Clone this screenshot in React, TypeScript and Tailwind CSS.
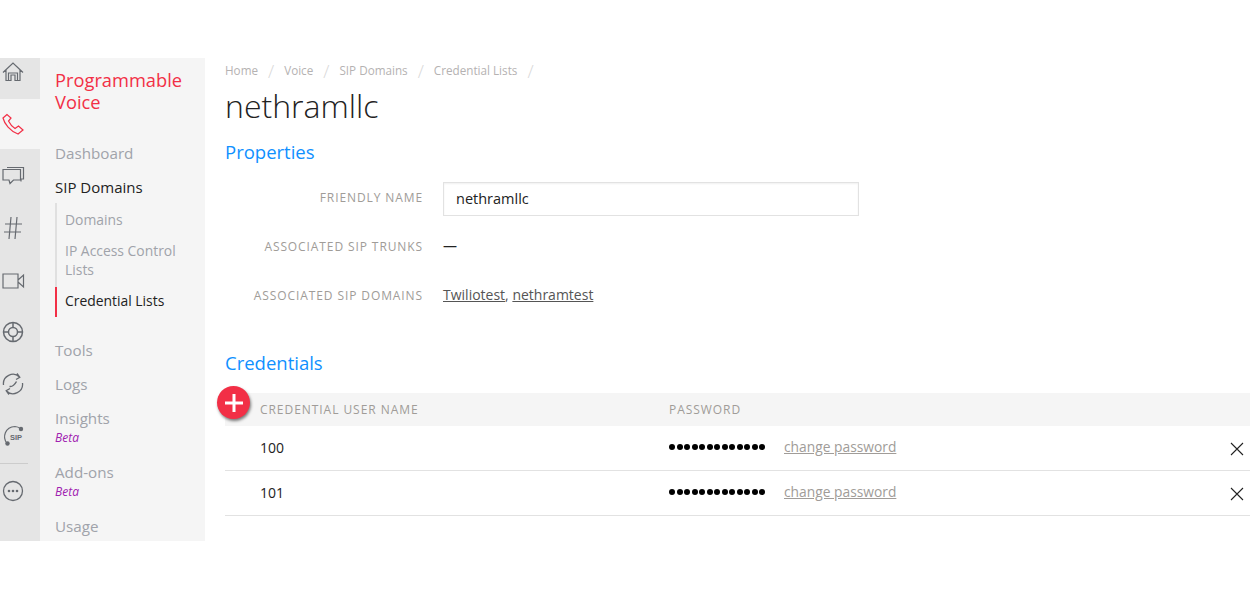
import React from "react";

const Ico = ({ children }: { children: React.ReactNode }) => (
  <svg width="24" height="24" viewBox="0 0 24 24" fill="none" stroke="currentColor" strokeWidth="1.200">
    {children}
  </svg>
);

const railTop = [
  {
    h: 41,
    cls: "flex items-center pl-[1px] pb-[12px]",
    icon: <path d="M2 11.500 12 2l10 9.500M5 9v10.500h5V14h4v5.500h5V9M7.500 19.500V12h9v7.500" />,
  },
  {
    h: 50,
    cls: "flex items-center pl-[1px] bg-[#f5f5f5] text-[#f22f46]",
    icon: <path d="M6 2.500 2 6c1.500 6 7 13 15 16l5-4-4.500-4-3.500 2.500C11.500 15 9 12 7.500 9L10 6z" />,
  },
  {
    h: 52,
    cls: "flex items-center pl-[1px]",
    icon: <path d="M6 4.500h16.500V16H20v2.500M2 6.500h17.500v10.500h-7l-3.500 3.500-1-3.500H2z" />,
  },
  {
    h: 53,
    cls: "flex items-center pl-[1px]",
    icon: <path d="M10 1 8 23M16 1l-2 22M4 8h17M3 16h17" />,
  },
  {
    h: 52,
    cls: "flex items-center pl-[1px] pt-[2px]",
    icon: <path d="M2 5h15v14H2zM17 11l5.500-5v12L17 13" />,
  },
  {
    h: 52,
    cls: "flex items-center pl-[1px]",
    icon: (
      <>
        <circle cx="12" cy="12" r="9.500" strokeWidth="1.500" />
        <circle cx="12" cy="12" r="4.500" strokeWidth="1.500" />
        <path d="M12 2.500v5M12 16.500v5M2.500 12h5M16.500 12h5" strokeWidth="1.500" />
      </>
    ),
  },
  {
    h: 52,
    cls: "flex items-center pl-[1px]",
    icon: (
      <>
        <path d="M2.500 13a9.500 9.500 0 0 1 16-8M21.500 11a9.500 9.500 0 0 1-16 8M16 1.500l2.800 3.800L15 7.500M8 22.500l-2.800-3.800L9 16.500" strokeWidth="1.300" />
        <path d="M8.500 14.500c2.500.5 5-1.500 7-5" strokeWidth="1.500" />
      </>
    ),
  },
];

const NavItem = ({ label, beta, className = "" }: { label: string; beta?: boolean; className?: string }) => (
  <div className={className}>
    <div className="text-[15.200px] leading-[20px] text-[#a0a3aa]">{label}</div>
    {beta && <div className="mt-[2px] text-[12px] leading-[16px] italic text-[#a020b0]">Beta</div>}
  </div>
);

const Field = ({ label, children }: { label: string; children: React.ReactNode }) => (
  <div className="flex items-center h-[49px]">
    <div className="w-[198px] text-right text-[12px] tracking-[0.9px] text-[#a09c98]">{label}</div>
    <div className="ml-[20px] flex-1">{children}</div>
  </div>
);

const rows = ["100", "101"];

export default function App() {
  return (
    <div className="w-[1250px] h-[600px] bg-white overflow-hidden pt-[58px] flex items-start font-['Open_Sans',sans-serif]">
      <div className="w-[40px] h-[483px] bg-[#e5e5e5] shrink-0 flex flex-col text-[#666a70]">
        {railTop.map((r, i) => (
          <div key={i} style={{ height: r.h }} className={r.cls}>
            <Ico>{r.icon}</Ico>
          </div>
        ))}
        <div className="h-[50px] flex items-center pl-[2px] pt-[3px]">
          <svg width="23" height="23" viewBox="0 0 23 23" fill="none" stroke="currentColor" strokeWidth="1.200">
            <path d="M5 18.500C0 12 3 2 13 1.500c2 0 4 1 6 2.500" />
            <circle cx="5.500" cy="18.500" r="2.200" fill="currentColor" stroke="none" />
            <circle cx="19" cy="4" r="2.200" fill="currentColor" stroke="none" />
            <text x="8" y="15" fontSize="7.500" fontWeight="700" fill="currentColor" stroke="none" fontFamily="Liberation Sans, sans-serif">SIP</text>
          </svg>
        </div>
        <div className="w-[28px] border-t border-[#cccccc] mt-[3px]" />
        <div className="h-[54px] flex items-center pl-[1px]">
          <Ico>
            <circle cx="12" cy="12" r="9.500" strokeWidth="1.300" />
            <circle cx="8" cy="12" r="1.300" fill="currentColor" stroke="none" />
            <circle cx="12" cy="12" r="1.300" fill="currentColor" stroke="none" />
            <circle cx="16" cy="12" r="1.300" fill="currentColor" stroke="none" />
          </Ico>
        </div>
      </div>

      <div className="w-[165px] h-[483px] bg-[#f5f5f5] shrink-0 pl-[15px] pr-[10px] pt-[11px] overflow-hidden">
        <div className="text-[18.300px] leading-[22px] text-[#f22f46]">Programmable Voice</div>
        <NavItem label="Dashboard" className="mt-[30px]" />
        <div className="mt-[14px] text-[15px] leading-[20px] font-medium text-[#222222]">SIP Domains</div>
        <div className="mt-[6px] w-full text-[13.900px] leading-[19px]">
          <div className="border-l-2 border-[#e0e0e0] pl-[8px] pt-[7px] pb-[8px] text-[#a0a3aa]">Domains</div>
          <div className="border-l-2 border-[#e0e0e0] pl-[8px] pt-[4px] pb-[8px] text-[#a0a3aa]">IP Access Control Lists</div>
          <div className="border-l-2 border-[#f22f46] pl-[8px] pt-[4px] pb-[7px] text-[#222222]">Credential Lists</div>
        </div>
        <NavItem label="Tools" className="mt-[23px]" />
        <NavItem label="Logs" className="mt-[14px]" />
        <NavItem label="Insights" beta className="mt-[14px]" />
        <NavItem label="Add-ons" beta className="mt-[16px]" />
        <NavItem label="Usage" className="mt-[16px]" />
      </div>

      <div className="flex-1 pl-[20px]">
        <div className="flex items-center h-[26px] text-[11.700px] text-[#b5b2b2]">
          {["Home", "Voice", "SIP Domains", "Credential Lists"].map((b) => (
            <React.Fragment key={b}>
              <span>{b}</span>
              <span className="mx-[10px] font-light text-[#d8d8d8] text-[18px]">/</span>
            </React.Fragment>
          ))}
        </div>
        <h1 className="text-[32px] leading-[44px] font-light text-[#222222]">nethramllc</h1>
        <h2 className="mt-[12px] text-[18.500px] leading-[24px] text-[#1090ff]">Properties</h2>
        <div className="mt-[9px]">
          <Field label="FRIENDLY NAME">
            <div className="mt-[2px] w-[416px] h-[34px] border border-[#e2e2e2] shadow-[inset_0_1px_2px_#f0f0f0] pl-[12px] flex items-center text-[14.500px] text-[#222222]">nethramllc</div>
          </Field>
          <Field label="ASSOCIATED SIP TRUNKS">
            <div className="pb-[2px] text-[14px] text-[#222222]">—</div>
          </Field>
          <Field label="ASSOCIATED SIP DOMAINS">
            <div className="pb-[2px] text-[14px] text-[#555555]">
              <span className="underline">Twiliotest</span>, <span className="underline">nethramtest</span>
            </div>
          </Field>
        </div>
        <h2 className="mt-[31px] text-[18.500px] leading-[24px] text-[#1090ff]">Credentials</h2>
        <div className="relative mt-[18px]">
          <div className="absolute left-[-8px] top-[-7px] w-[33px] h-[33px] rounded-full bg-[#f22f46] shadow-[1px_2px_3px_rgba(0,0,0,0.5)] flex items-center justify-center">
            <svg width="18" height="18" viewBox="0 0 18 18" stroke="white" strokeWidth="3">
              <path d="M9 0v18M0 9h18" />
            </svg>
          </div>
          <div className="h-[33px] bg-[#f5f5f5] flex items-center text-[12px] tracking-[0.950px] text-[#a09c98]">
            <div className="w-[444px] pl-[35px]">CREDENTIAL USER NAME</div>
            <div>PASSWORD</div>
          </div>
          {rows.map((r) => (
            <div key={r} className="h-[45px] pb-[2px] border-b border-[#e2e2e2] flex items-center text-[14px] text-[#222222]">
              <div className="w-[444px] pl-[35px]">{r}</div>
              <div className="w-[115px] flex gap-[1.500px]">
                {Array.from({ length: 13 }).map((_, i) => (
                  <span key={i} className="w-[6px] h-[6px] rounded-full bg-black" />
                ))}
              </div>
              <span className="text-[13.800px] text-[#a09c98] underline">change password</span>
              <div className="ml-auto text-[#222222] mr-[5px] pt-[4px]">
                <svg width="16" height="16" viewBox="0 0 16 16" stroke="currentColor" strokeWidth="1.100">
                  <path d="M2 2l12 12M14 2L2 14" />
                </svg>
              </div>
            </div>
          ))}
        </div>
      </div>
    </div>
  );
}
